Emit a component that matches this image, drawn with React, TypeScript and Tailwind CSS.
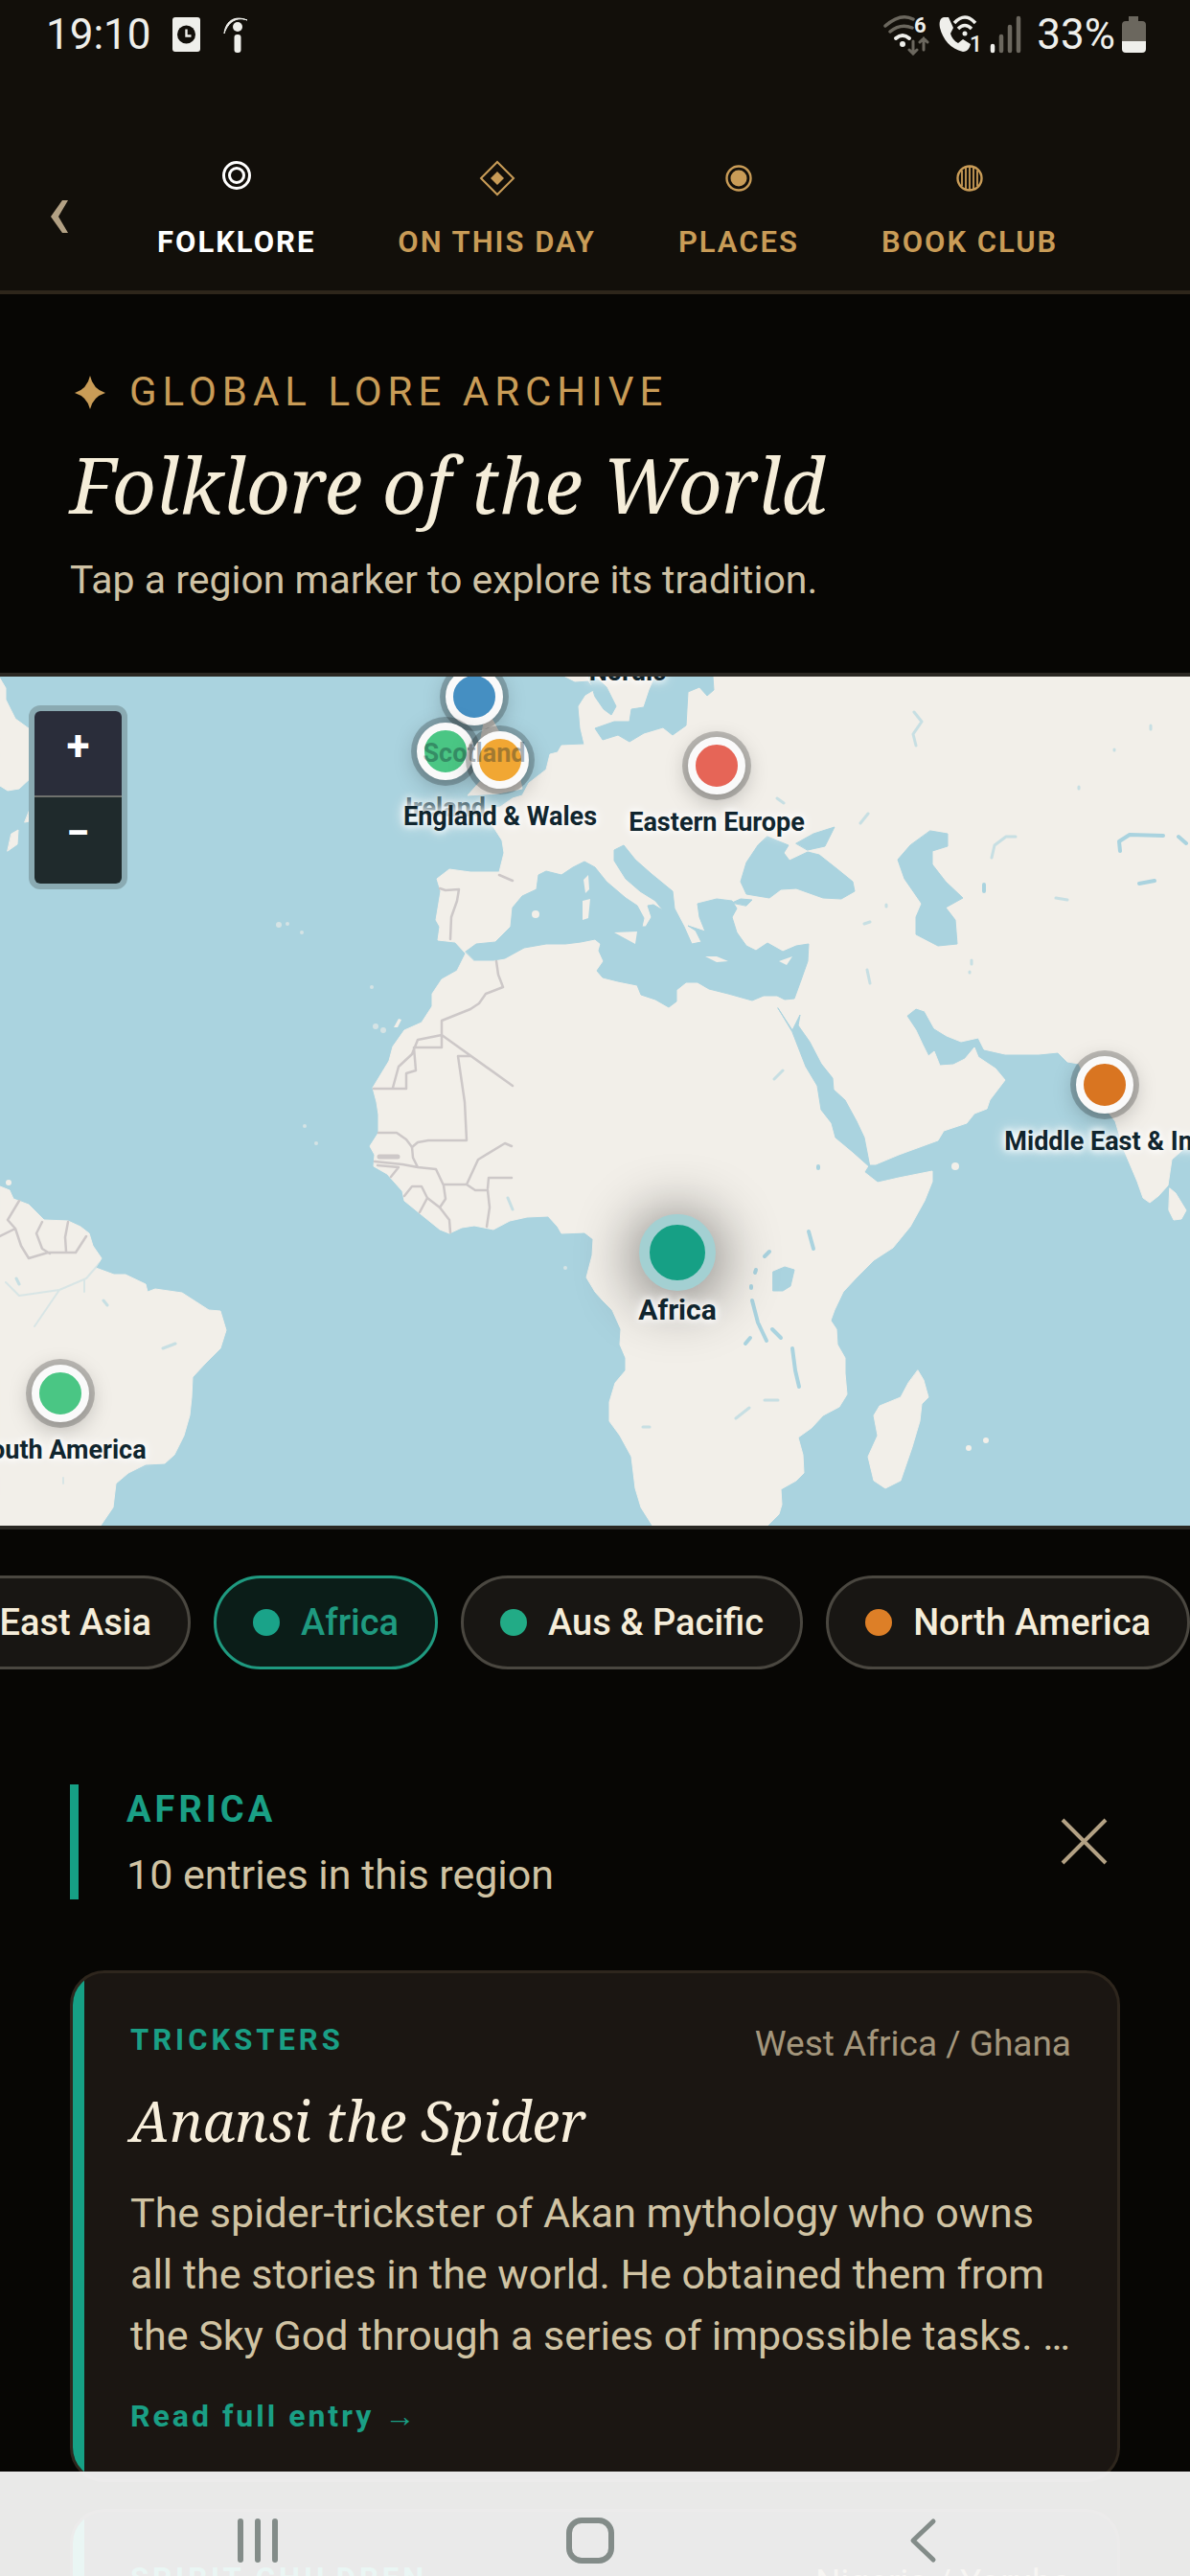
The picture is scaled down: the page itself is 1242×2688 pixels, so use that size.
import { useState } from "react"

interface Region {
  id: string
  name: string
  color: string
  x: number
  y: number
  labelX?: number
  labelClass?: string
}

interface Entry {
  category: string
  origin: string
  title: string
  summary: string
}

const MAP_WIDTH = 1242
const MAP_HEIGHT = 886

// marker positions are in map units, later ones sit on top
const regions: Region[] = [
  { id: "nordic", name: "Nordic", color: "#8e44ad", x: 655, y: -64 },
  {
    id: "scotland",
    name: "Scotland",
    color: "#458fc2",
    x: 495,
    y: 21,
    labelClass: "z-30 opacity-35 [text-shadow:none]",
  },
  { id: "ireland", name: "Ireland", color: "#4ac684", x: 465, y: 78, labelClass: "opacity-60" },
  { id: "england", name: "England & Wales", color: "#f1a733", x: 522, y: 87 },
  { id: "eastern-europe", name: "Eastern Europe", color: "#e66557", x: 748, y: 93 },
  { id: "middle-east", name: "Middle East & India", color: "#d97521", x: 1153, y: 426, labelX: 1165 },
  { id: "south-america", name: "South America", color: "#4ac684", x: 63, y: 748 },
  { id: "africa", name: "Africa", color: "#16a085", x: 707, y: 601 },
]

const chips = [
  { id: "east-asia", name: "East Asia", color: "#e66557" },
  { id: "africa", name: "Africa", color: "#1aa389" },
  { id: "pacific", name: "Aus & Pacific", color: "#22ab86" },
  { id: "north-america", name: "North America", color: "#dd7f27" },
]

const entries: Entry[] = [
  {
    category: "Tricksters",
    origin: "West Africa / Ghana",
    title: "Anansi the Spider",
    summary:
      "The spider-trickster of Akan mythology who owns all the stories in the world. He obtained them from the Sky God through a series of impossible tasks. …",
  },
  {
    category: "Spirit Children",
    origin: "Nigeria / Yoruba",
    title: "Abiku",
    summary: "Spirit children who die and return to the same mother.",
  },
]

function StatusBar() {
  return (
    <div className="flex h-[71px] items-center justify-between pr-[46px] pl-12 text-[44px] text-[#efefeb]">
      <div className="flex items-center gap-[22px]">
        <span>19:10</span>
        <svg width="30" height="36" viewBox="0 0 30 36">
          <rect width="29" height="36" rx="3" fill="#efefeb" />
          <circle cx="14.500" cy="18" r="9.500" fill="#120f0a" />
          <path d="M14.500 12.500v7h5" fill="none" stroke="#efefeb" strokeWidth="2.400" />
        </svg>
        <svg width="28" height="40" viewBox="0 0 28 40">
          <path d="M2 19C3 8 11-1 26 5 15 1 6 7 2 19z" fill="#efefeb" stroke="#efefeb" />
          <circle cx="16" cy="12" r="5" fill="#efefeb" />
          <rect x="12.500" y="20" width="7" height="19" rx="3" fill="#efefeb" />
        </svg>
      </div>
      <div className="flex items-center gap-2">
        <svg width="150" height="44" viewBox="0 0 150 44">
          <g fill="none" strokeLinecap="round" strokeWidth="3.500">
            <path d="M4 13Q20-1 33 6M9 19q11-9 23-4" stroke="#6b675e" />
            <path d="M15 26q7-6 14 0" stroke="#efefeb" strokeWidth="4" />
            <path d="M33 29v13m-4-4 4 4 4-4M44 38V26m-4 4 4-4 4 4" stroke="#6b675e" strokeWidth="3" />
          </g>
          <circle cx="22" cy="32" r="3" fill="#efefeb" />
          <text x="34" y="20" fontSize="22" fontWeight="700" fill="#efefeb">
            6
          </text>
          <path
            d="M65 4c-4 1-5 5-4 11 3 12 11 22 24 25 5 0 7-4 8-8l-8-5-5 4c-4-2-7-6-8-10l3-6-5-11z"
            fill="#efefeb"
          />
          <path d="M76 10q11-12 22 0M80 16q7-7 14 0" fill="none" stroke="#efefeb" strokeWidth="3.500" />
          <circle cx="87" cy="21" r="2.500" fill="#efefeb" />
          <text x="92" y="40" fontSize="23" fontWeight="500" fill="#efefeb">
            1
          </text>
          <g strokeLinecap="round" strokeWidth="4.500">
            <path d="M116 34v5" stroke="#efefeb" />
            <path d="M125 24v15M134 14v25M143 5v34" stroke="#6b675e" />
          </g>
        </svg>
        <div className="flex items-center">
          <span className="pl-1">33%</span>
          <svg className="ml-[7px]" width="25" height="38" viewBox="0 0 25 38">
            <path d="M7 0h10v5h4q4 0 4 4v17H0V9q0-4 4-4h3z" fill="#6b675e" />
            <path d="M0 26h25v8q0 4-4 4H4q-4 0-4-4z" fill="#efefeb" />
          </svg>
        </div>
      </div>
    </div>
  )
}

const tabs = [
  {
    label: "Folklore",
    icon: (
      <>
        <circle cx="20" cy="18" r="13.500" />
        <circle cx="20" cy="18" r="7.500" />
      </>
    ),
  },
  {
    label: "On this day",
    icon: (
      <>
        <path d="M20 4l17 17-17 17L3 21z" strokeWidth="2" />
        <path d="M20 14l7 7-7 7-7-7z" fill="currentColor" stroke="none" />
      </>
    ),
  },
  {
    label: "Places",
    icon: (
      <>
        <circle cx="20" cy="21" r="12.500" strokeWidth="2.400" />
        <circle cx="20" cy="21" r="8.500" fill="currentColor" stroke="none" />
      </>
    ),
  },
  {
    label: "Book club",
    icon: (
      <>
        <circle cx="20" cy="21" r="12.500" strokeWidth="2.400" />
        <path d="M12 13v16M16 10v22M20 9v24M24 10v22M28 13v16" strokeWidth="1.800" />
      </>
    ),
  },
]

function TabBar() {
  const [active, setActive] = useState("Folklore")

  return (
    <nav className="mt-[78px] flex items-center">
      <button aria-label="Previous" className="ml-12 w-[73px] shrink-0 text-[#b3a184]">
        <svg width="26" height="36" viewBox="0 0 26 36" fill="currentColor">
          <path d="M17 1h6l-10 17 10 17h-6L5 18z" />
        </svg>
      </button>
      {tabs.map((tab) => (
        <button
          key={tab.label}
          onClick={() => setActive(tab.label)}
          className={`flex shrink-0 flex-col items-center gap-7 px-[43px] pt-4 pb-[30px] text-[31px] leading-10 tracking-[2px] uppercase ${
            active === tab.label ? "font-bold text-white" : "font-semibold text-[#c99c57]"
          }`}
        >
          <svg width="40" height="40" viewBox="0 0 40 40" fill="none" stroke="currentColor" strokeWidth="3">
            {tab.icon}
          </svg>
          {tab.label}
        </button>
      ))}
    </nav>
  )
}

function WorldMap() {
  return (
    <svg
      className="absolute inset-0 h-full w-full"
      viewBox={`0 0 ${MAP_WIDTH} ${MAP_HEIGHT}`}
      preserveAspectRatio="xMidYMid slice"
      strokeLinejoin="round"
      strokeLinecap="round"
    >
      <rect width={MAP_WIDTH} height={MAP_HEIGHT} fill="#aad3df" />
      <g fill="#f2efe9" stroke="#f2efe9">
        {/* Europe, Africa and Asia */}
        <path d="M590 0L600 5 614 4 621 14 611 20 604 31 606 54 610 71 586 72 582 79 574 81 570 97 552 111 545 124 535 127 522 136 500 140 504 148 515 157 524 171 526 184 521 204 491 204 469 201 456 211 460 224 455 254 459 261 457 275 475 277 486 289 477 307 461 316 451 331 451 344 440 361 422 369 410 386 406 401 389 429 393 444 395 457 395 476 386 490 391 499 390 511 404 519 420 537 422 547 438 560 459 577 469 581 482 575 495 573 515 577 532 568 550 564 572 563 582 574 586 581 610 580 619 587 618 604 612 627 621 642 629 651 639 661 648 681 647 697 653 711 653 724 642 737 636 757 636 777 647 792 659 814 663 847 669 867 681 886 801 886 813 874 816 864 815 848 831 839 839 831 838 812 833 794 847 784 859 771 876 762 884 749 882 727 882 711 874 697 873 681 867 672 871 661 880 642 894 627 912 609 932 596 950 574 965 547 973 527 973 516 958 519 938 523 916 528 902 517 907 509 914 509 938 499 979 484 985 474 1009 466 1017 456 1030 451 1033 442 1049 421 1039 409 1021 397 1017 387 1007 399 995 405 981 406 975 391 969 396 963 384 956 369 946 354 956 346 965 349 975 367 988 375 1003 381 1021 377 1027 389 1049 394 1084 394 1104 392 1114 402 1126 404 1136 428 1164 464 1173 494 1187 527 1193 544 1200 549 1209 542 1219 531 1223 504 1242 487V0z" />
        {/* British Isles */}
        <path d="M508 34L522 60 520 75 540 95 545 117 520 122 488 124 505 105 500 75zM452 60L478 64 478 90 450 94z" />
        {/* South America */}
        <path d="M0 532L10 536 14 545 30 551 46 567 71 568 84 574 93 581 97 594 106 607 100 617 119 624 131 624 152 634 154 642 162 639 190 643 204 652 218 661 230 662 236 682 230 701 214 717 201 731 200 752 198 771 192 792 182 812 172 821 152 822 134 831 121 842 118 867 105 886H0z" />
        {/* Newfoundland */}
        <path d="M0 2L6 12 6 24 16 44 34 57 60 84 40 96 34 104 20 117 8 119 0 114zM38 122L60 134 52 146 26 152zM12 164L19 160 18 175 8 182z" />
        {/* Madagascar and Sri Lanka */}
        <path d="M958 724L964 734 969 752 962 759 960 777 952 804 940 839 924 847 912 839 906 814 916 792 912 771 918 761 940 752 948 737zM1221 534L1227 539 1238 557 1233 566 1225 567 1220 557z" />
      </g>
      <g fill="#aad3df" stroke="#aad3df">
        {/* Mediterranean */}
        <path d="M486 287L497 279 517 277 533 261 535 241 545 229 560 222 562 207 570 203 586 207 598 199 610 193 621 199 633 214 653 231 665 239 672 252 670 261 674 261 680 251 676 239 682 238 692 244 684 234 668 224 653 211 641 192 641 181 651 176 663 191 680 206 702 224 704 242 714 261 722 279 732 277 726 265 718 260 736 266 730 251 728 237 748 232 764 234 769 242 764 251 769 267 779 281 789 286 801 278 817 287 831 281 844 279 843 297 837 314 829 336 819 337 811 333 797 333 785 338 760 331 740 326 728 319 716 319 706 327 706 339 698 345 684 337 669 332 665 322 645 318 629 314 623 307 630 297 625 286 627 279 621 274 606 277 590 279 570 279 547 283 527 294 515 296 495 296z" />
        {/* Red Sea */}
        <path d="M812 346L827 369 835 353 833 364 845 381 857 404 869 419 870 431 882 442 894 464 902 481 908 512 890 496 872 481 868 466 857 452 853 427 841 407 827 371z" />
        {/* Baltic */}
        <path d="M700 0H744L745 14 738 20 730 11 718 16 716 51 702 61 692 53 672 59 657 68 645 61 629 66 621 54 641 47 657 47 659 34 672 32 678 14 684 0zM615 0H621L633 11 643 31 638 40 630 34 621 21z" />
        {/* Black Sea, Azov, Marmara, Caspian */}
        <path d="M801 167L823 176 818 184 824 192 843 183 855 186 874 201 890 214 892 224 878 232 859 231 831 221 815 222 803 231 779 227 773 214 779 194 791 176zM831 174L849 164 871 157 861 177 843 181zM764 236L773 232 785 233 779 239z" />
        <path d="M971 161L989 164 989 177 973 182 973 196 987 214 1005 231 987 241 997 254 999 279 979 281 956 269 956 251 962 237 944 211 937 191 950 176z" />
        <path d="M807 621L819 616 829 619 825 636 817 641 807 641z" />
      </g>
      {/* lakes and rivers */}
      <g fill="none" stroke="#aad3df" strokeWidth="4">
        <path d="M785 651L791 674 800 693M827 701L830 724 834 741M844 579L849 597M798 605L803 600M788 622L789 619M784 636V638M806 681L815 690M778 696L783 690" />
        <path d="M1169 182L1168 172 1179 165 1214 166M1189 216L1205 213M1230 167L1238 174M1027 217V224M854 511V513" />
        <path
          d="M1035 189L1038 176 1050 167 1060 167M954 37L962 47 953 60 956 72M768 774L782 763M798 755H812M671 783H678M808 420L817 411M898 153L906 143M811 127L818 132M925 240V238M902 258L908 256M1102 231L1114 233M905 306L908 320M1014 296V300M1012 308V309M1126 115V117M1201 51V55M1163 76V77M170 701L183 696M108 651L112 656M17 628L20 634M530 544L535 556"
          strokeWidth="3"
          opacity="0.600"
        />
        <path d="M6 632L20 646 62 640 90 628 104 612M62 640L36 678M88 630V642M66 836V842" strokeWidth="2" opacity="0.350" />
      </g>
      {/* islands */}
      <g fill="#f2efe9">
        <path d="M813 297L827 292 821 301zM736 292L748 292 760 297 748 298zM641 267L665 266 663 279zM608 234L616 232 614 252 608 254zM609 212L614 207 615 222 611 226z" />
        <circle cx="559" cy="248" r="4" />
        <circle cx="997" cy="511" r="4" />
        <circle cx="1011" cy="805" r="3" />
        <circle cx="1029" cy="797" r="3" />
        <circle cx="9" cy="528" r="3" />
        <path d="M416 357L419 358 415 366 411 366z" />
        <g opacity="0.600">
          <circle cx="392" cy="365" r="3" />
          <circle cx="400" cy="369" r="3" />
          <circle cx="388" cy="324" r="2" />
          <circle cx="291" cy="259" r="3" />
          <circle cx="300" cy="258" r="2" />
          <circle cx="315" cy="267" r="2" />
          <circle cx="318" cy="469" r="2" />
          <circle cx="330" cy="487" r="2" />
          <circle cx="590" cy="617" r="2" />
        </g>
      </g>
      {/* borders */}
      <g fill="none" stroke="#cdc8c8" strokeWidth="2.500">
        <path d="M459 221L465 223 479 222 477 234 471 251 470 274M521 207L535 213" />
        <path d="M518 297L520 311 525 324 507 331 500 341 491 347 461 359V387H432L434 411 424 414V430H390M461 374L436 379 430 394 416 407 410 429M461 374L535 427M491 396H478L485 444 487 484H447L436 486 430 491" />
        <path d="M395 476H414L424 483 430 491 431 502 436 512 420 509 391 506M394 510L416 512 408 522M436 512L455 514 463 531 465 545 459 554 446 544 440 532H430L422 542M446 544L438 559M459 554L469 567 470 580M463 530H487L496 536 509 536 511 554 508 574M487 530L499 504 527 487 534 490M509 534L510 523H534" />
        <path d="M396 501H415" strokeWidth="5" />
        <path d="M20 547L8 567 16 576 22 594 30 607 50 601 79 601 90 584M44 569L38 581 44 597 52 602M71 569L68 585 69 600M0 584L16 576" />
      </g>
    </svg>
  )
}

function MapPanel({ selected, onSelect }: { selected: string; onSelect: (id: string) => void }) {
  return (
    <section className="relative aspect-[1242/894] overflow-hidden border-y-4 border-[#2b2823]">
      <WorldMap />
      {regions.map((region) => {
        const isActive = region.id === selected
        return (
          <div key={region.id}>
            <button
              aria-label={region.name}
              onClick={() => onSelect(region.id)}
              className={`absolute z-20 -translate-x-1/2 -translate-y-1/2 rounded-full ${
                isActive
                  ? "size-20 border-[11px] border-[#a3d0d2] shadow-[0_6px_60px_8px_rgba(0,0,0,0.45)]"
                  : "size-[60px] border-8 border-[#fafafa] shadow-[0_0_0_6px_rgba(0,0,0,0.22),0_6px_24px_0_rgba(0,0,0,0.28)]"
              }`}
              style={{
                left: `${(region.x / MAP_WIDTH) * 100}%`,
                top: `${(region.y / MAP_HEIGHT) * 100}%`,
                backgroundColor: region.color,
              }}
            />
            <span
              className={`pointer-events-none absolute -translate-x-1/2 -translate-y-1/2 font-bold whitespace-nowrap text-[#10252e] ${
                isActive ? "text-[30px]" : "text-[27px]"
              } ${region.labelClass ?? "z-20"} ${
                region.id === "scotland" ? "" : "[text-shadow:0_0_6px_#fff,0_0_10px_#fff,0_0_16px_#fff]"
              }`}
              style={{
                left: `${((region.labelX ?? region.x) / MAP_WIDTH) * 100}%`,
                top: `${((region.y + 59) / MAP_HEIGHT) * 100}%`,
              }}
            >
              {region.name}
            </span>
          </div>
        )
      })}
      <div className="absolute top-[30px] left-[30px] z-30 flex w-[103px] flex-col overflow-hidden rounded-xl border-[6px] border-[#8aaab2] text-[44px] font-bold text-white">
        <button aria-label="Zoom in" className="h-[90px] border-b-2 border-[#6f716d] bg-[#2a2d3a] pb-4 leading-none">
          +
        </button>
        <button aria-label="Zoom out" className="h-[90px] bg-[#1f2a2c] pb-4 leading-none">
          −
        </button>
      </div>
    </section>
  )
}

function EntryCard({ entry }: { entry: Entry }) {
  return (
    <article className="flex overflow-hidden rounded-[36px] border-[3px] border-[#2e261d] bg-[#1b1612]">
      <div className="w-3 shrink-0 bg-[#16a085]" />
      <div className="min-w-0 flex-1 px-12 pt-[50px] pb-[46px]">
        <div className="flex items-start justify-between">
          <span className="text-[31px] leading-10 font-bold tracking-[4px] text-[#1a9f85] uppercase">
            {entry.category}
          </span>
          <span className="text-[37px] leading-12 text-[#a4967c]">{entry.origin}</span>
        </div>
        <h3 className="mt-4 font-['Noto_Serif','Liberation_Serif',serif] text-[58px] leading-20 text-[#f7eedb] italic">
          {entry.title}
        </h3>
        <p className="mt-6 text-[43px] leading-16 text-[#d0c3a3]">{entry.summary}</p>
        <a href="#" className="mt-8 block text-[32px] leading-10 font-bold tracking-[3px] text-[#1a9f85]">
          Read full entry →
        </a>
      </div>
    </article>
  )
}

function SystemNav() {
  return (
    <div className="absolute inset-x-0 bottom-0 z-40 grid h-[109px] grid-cols-3 items-start justify-items-center bg-white/91 pt-12 pr-[105px] pl-[95px] text-[#838c89]">
      <button aria-label="Recent apps">
        <svg width="48" height="48" viewBox="0 0 48 48" stroke="currentColor" strokeWidth="6" strokeLinecap="round">
          <path d="M6 4v40M24 4v40M42 4v40" />
        </svg>
      </button>
      <button aria-label="Home">
        <svg width="50" height="48" viewBox="0 0 50 48" fill="none" stroke="currentColor" strokeWidth="6">
          <rect x="3" y="3" width="44" height="42" rx="13" />
        </svg>
      </button>
      <button aria-label="Back">
        <svg
          width="48"
          height="48"
          viewBox="0 0 48 48"
          fill="none"
          stroke="currentColor"
          strokeWidth="5"
          strokeLinecap="round"
          strokeLinejoin="round"
        >
          <path d="M35 4L14 24l21 20" />
        </svg>
      </button>
    </div>
  )
}

export default function App() {
  const [selected, setSelected] = useState("africa")

  return (
    <div className="relative h-screen overflow-hidden bg-[#070604] font-[Roboto,sans-serif]">
      <header className="overflow-hidden border-b-4 border-[#2e261b] bg-[#120f0a]">
        <StatusBar />
        <TabBar />
      </header>

      <section className="px-[73px] pt-[78px] pb-[73px]">
        <div className="flex items-center gap-6 text-[42px] leading-12 tracking-[6px] text-[#c99c57] uppercase">
          <svg className="ml-1" width="34" height="36" viewBox="0 0 34 36" fill="currentColor">
            <path d="M17 1Q20 15 33 19 20 23 17 36 14 23 1 19 14 15 17 1z" />
          </svg>
          Global Lore Archive
        </div>
        <h1 className="mt-4 font-['Noto_Serif','Liberation_Serif',serif] text-[80px] leading-28 text-[#f5edd9] italic">
          Folklore of the World
        </h1>
        <p className="mt-5 text-[41px] leading-12 text-[#cfc2a5]">Tap a region marker to explore its tradition.</p>
      </section>

      <MapPanel selected={selected} onSelect={setSelected} />

      <div className="flex justify-end gap-6 overflow-hidden pt-12">
        {chips.map((chip) => (
          <button
            key={chip.id}
            onClick={() => setSelected(chip.id)}
            className={`flex h-[98px] shrink-0 items-center gap-[22px] rounded-full border-[3px] px-[38px] text-[38px] font-medium ${
              chip.id === selected
                ? "border-[#1f9a80] bg-[#0b1d18] text-[#1f9a80]"
                : "border-[#4a4740] bg-[#181613] text-[#f5edd9]"
            }`}
          >
            <span className="size-7 rounded-full" style={{ backgroundColor: chip.color }} />
            {chip.name}
          </button>
        ))}
      </div>

      <section className="mt-[120px] px-[73px]">
        <div className="flex items-center justify-between pr-3">
          <div className="flex flex-col gap-4 border-l-[9px] border-[#16a085] pl-[50px]">
            <h2 className="text-[38px] leading-[52px] font-bold tracking-[4px] text-[#1a9f85] uppercase">Africa</h2>
            <p className="text-[43px] leading-[52px] text-[#d0c3a3]">10 entries in this region</p>
          </div>
          <button aria-label="Close region" className="text-[#b3a184]">
            <svg width="52" height="52" viewBox="0 0 52 52" stroke="currentColor" strokeWidth="4">
              <path d="M4 3l45 45M49 3L4 48" />
            </svg>
          </button>
        </div>

        <div className="mt-[74px] flex flex-col gap-7">
          {entries.map((entry) => (
            <EntryCard key={entry.title} entry={entry} />
          ))}
        </div>
      </section>

      <SystemNav />
    </div>
  )
}
